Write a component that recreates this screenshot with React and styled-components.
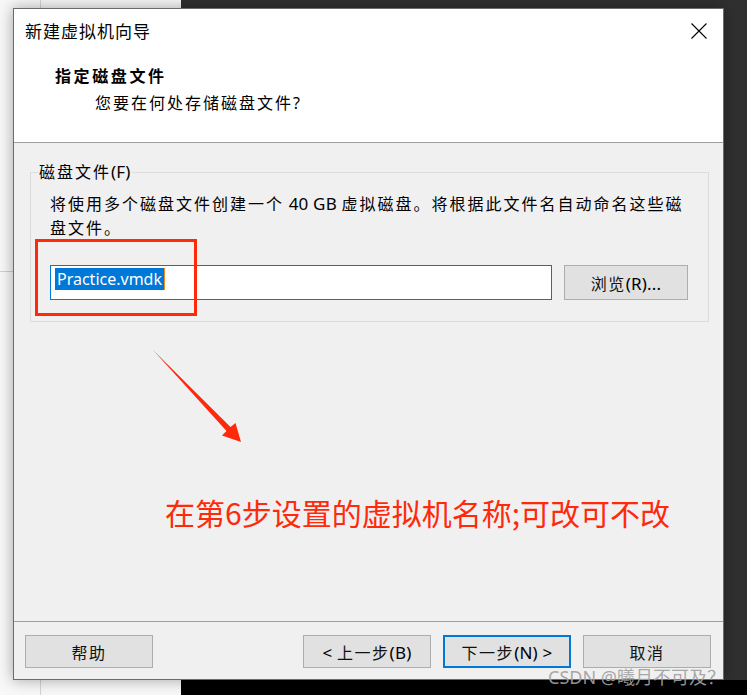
import React from 'react';
import styled, { createGlobalStyle } from 'styled-components';

const GlobalStyle = createGlobalStyle`
  html, body {
    margin: 0;
    padding: 0;
  }
  body {
    width: 747px;
    height: 695px;
    overflow: hidden;
    font-family: "Noto Sans", "Noto Sans CJK SC", sans-serif;
  }
`;

const Desktop = styled.div`
  position: relative;
  width: 747px;
  height: 695px;
  box-sizing: border-box;
  padding: 8px 23px 15px 13px;
  background:
    linear-gradient(#000, #000) 181px 680px / 566px 15px no-repeat,
    linear-gradient(#d4d4d4, #d4d4d4) 40px 0 / 1px 695px no-repeat,
    linear-gradient(#d0d0d0, #d0d0d0) 0 271px / 13px 1px no-repeat,
    linear-gradient(to right, #f8f8f8 181px, #303030 181px);
`;

const Window = styled.div`
  width: 711px;
  height: 672px;
  box-sizing: border-box;
  border: 1px solid #6b6b6b;
  background: #f0f0f0;
  display: flex;
  flex-direction: column;
  box-shadow: 0 0 14px rgba(0, 0, 0, 0.35);
`;

const Header = styled.header`
  height: 134px;
  box-sizing: border-box;
  background: #fff;
  border-bottom: 1px solid #a0a0a0;
  padding: 12px 16px 0 11px;
`;

const TitleBar = styled.div`
  display: flex;
  justify-content: space-between;
  align-items: center;
  height: 20px;
`;

const Title = styled.span`
  font-family: "Noto Sans CJK SC", sans-serif;
  font-size: 17px;
  letter-spacing: 1px;
  line-height: 20px;
  color: #000;
`;

const Heading = styled.div`
  margin: 25px 0 0 30px;
  font-size: 16px;
  font-weight: 700;
  letter-spacing: 2.6px;
  line-height: 20px;
  color: #000;
`;

const SubText = styled.div`
  margin: 7px 0 0 70px;
  font-size: 16px;
  letter-spacing: 2px;
  line-height: 20px;
  color: #000;
`;

// Latin runs are set in a plain sans without the wide CJK tracking
const Latin = styled.span`
  font-family: "Noto Sans", sans-serif;
  font-size: 17px;
  letter-spacing: 0.2px;
  color: #000;
`;

const Body = styled.main`
  flex: 1;
  padding: 19px 14px 0 16px;
`;

const GroupBox = styled.fieldset`
  margin: 0;
  padding: 0;
  min-width: 0;
  border: 1px solid #dcdcdc;
`;

const GroupLabel = styled.legend`
  margin-left: 7px;
  padding: 0 1px;
  font-size: 16px;
  letter-spacing: 2px;
  line-height: 20px;
  color: #000;
`;

const GroupContent = styled.div`
  padding: 10px 20px 21px 19px;
`;

const Description = styled.p`
  margin: 0;
  font-size: 16px;
  letter-spacing: 2px;
  line-height: 24px;
  color: #000;
  white-space: nowrap;
`;

const InputRow = styled.div`
  display: flex;
  gap: 12px;
  margin-top: 25px;
  height: 35px;
`;

const TextField = styled.div`
  flex: 1;
  box-sizing: border-box;
  border: 1px solid #0078d7;
  background: #fff;
  padding: 2px 3px 2px 4px;
  display: flex;
  align-items: flex-start;
`;

const Selected = styled.span`
  background: #0078d7;
  color: #fff;
  font-size: 16px;
  line-height: 22px;
  padding: 0 2px;
  border-right: 1px solid #f08a24;
`;

const Button = styled.button`
  width: ${(p) => p.$width || 128}px;
  height: ${(p) => p.$height || 33}px;
  box-sizing: border-box;
  margin: 0;
  padding: 0;
  background: #e1e1e1;
  border: ${(p) => (p.$primary ? '2px solid #0078d7' : '1px solid #adadad')};
  font-family: "Noto Sans", "Noto Sans CJK SC", sans-serif;
  font-size: 16px;
  letter-spacing: 1.5px;
  color: #111;
`;

const Annotation = styled.div`
  display: flex;
  flex-direction: column;
  align-items: flex-start;
`;

const Arrow = styled.svg`
  display: block;
  margin: 25px 0 0 120px;
`;

const Note = styled.div`
  margin: 47px 0 0 135px;
  font-family: "Noto Sans CJK SC", sans-serif;
  font-size: 30px;
  line-height: 40px;
  color: #ff2a0c;
  white-space: nowrap;
`;

const Footer = styled.footer`
  height: 58px;
  box-sizing: border-box;
  border-top: 1px solid #a0a0a0;
  padding: 13px 12px 0 11px;
  display: flex;
  justify-content: space-between;
  align-items: flex-start;
`;

const ButtonGroup = styled.div`
  display: flex;
  gap: 12px;
`;

const RedFrame = styled.div`
  position: absolute;
  left: 35px;
  top: 239px;
  width: 162px;
  height: 77px;
  box-sizing: border-box;
  border: 3.5px solid #ff2a0c;
`;

const Watermark = styled.div`
  position: absolute;
  left: 548px;
  top: 665px;
  font-family: "Noto Sans", "Noto Sans CJK SC", sans-serif;
  font-size: 18px;
  line-height: 24px;
  color: rgba(160, 160, 160, 0.92);
  white-space: nowrap;
`;

const CloseIcon = () => (
  <svg width="16" height="16" viewBox="0 0 16 16">
    <path d="M0.5 0.5 L15.5 15.5 M15.5 0.5 L0.5 15.5" stroke="#000" strokeWidth="1.1" fill="none" />
  </svg>
);

export default function App() {
  return (
    <>
      <GlobalStyle />
      <Desktop>
        <Window>
          <Header>
            <TitleBar>
              <Title>新建虚拟机向导</Title>
              <CloseIcon />
            </TitleBar>
            <Heading>指定磁盘文件</Heading>
            <SubText>您要在何处存储磁盘文件?</SubText>
          </Header>

          <Body>
            <GroupBox>
              <GroupLabel>磁盘文件<Latin>(F)</Latin></GroupLabel>
              <GroupContent>
                <Description>
                  将使用多个磁盘文件创建一个<Latin> 40 GB </Latin>虚拟磁盘。将根据此文件名自动命名这些磁
                  <br />
                  盘文件。
                </Description>
                <InputRow>
                  <TextField>
                    <Selected>Practice.vmdk</Selected>
                  </TextField>
                  <Button $width={124} $height={35}>浏览<Latin>(R)...</Latin></Button>
                </InputRow>
              </GroupContent>
            </GroupBox>

            <Annotation>
              <Arrow width="95" height="98" viewBox="150 348 95 98">
                <polygon
                  points="153,351 230.5,428 235.5,424 241,443 222,436.5 226.5,432"
                  fill="#ff2a0c"
                />
              </Arrow>
              <Note>在第6步设置的虚拟机名称;可改可不改</Note>
            </Annotation>
          </Body>

          <Footer>
            <Button>帮助</Button>
            <ButtonGroup>
              <Button><Latin>&lt; </Latin>上一步<Latin>(B)</Latin></Button>
              <Button $primary>下一步<Latin>(N) &gt;</Latin></Button>
              <Button>取消</Button>
            </ButtonGroup>
          </Footer>
        </Window>

        <RedFrame />
        <Watermark>CSDN @曦月不可及？</Watermark>
      </Desktop>
    </>
  );
}
